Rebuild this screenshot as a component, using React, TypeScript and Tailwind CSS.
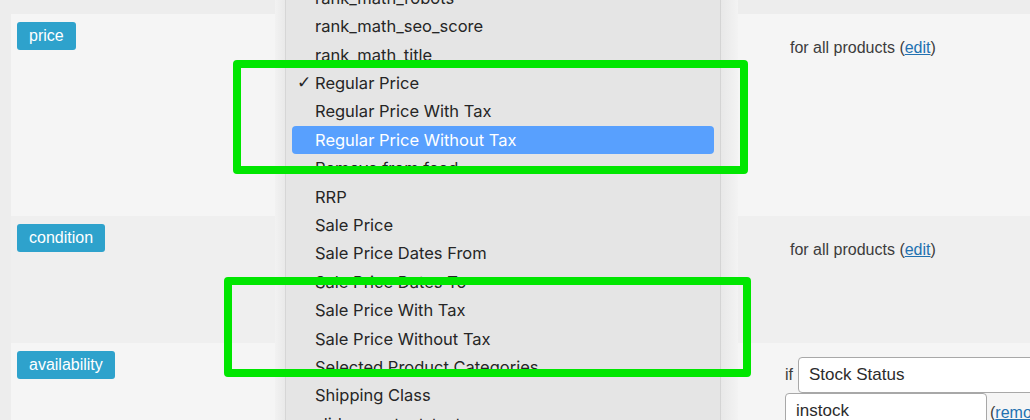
const menuItems = [
  'rank_math_robots',
  'rank_math_seo_score',
  'rank_math_title',
  'Regular Price',
  'Regular Price With Tax',
  'Regular Price Without Tax',
  'Remove from feed',
  'RRP',
  'Sale Price',
  'Sale Price Dates From',
  'Sale Price Dates To',
  'Sale Price With Tax',
  'Sale Price Without Tax',
  'Selected Product Categories',
  'Shipping Class',
  'slider_content_text',
];

function Badge({ label }: { label: string }) {
  return (
    <span className="inline-flex h-[28px] items-center rounded-[3px] bg-[#2ea2cc] px-[12px] text-[16px] text-white">
      {label}
    </span>
  );
}

function AllProducts() {
  return (
    <div className="pt-[14px] text-[16px] text-[#3c3c3c]">
      for all products (<a className="text-[#2271b1] underline">edit</a>)
    </div>
  );
}

export default function App() {
  return (
    <div className="relative h-[420px] w-[1030px] overflow-hidden bg-[#ededed] pt-[14px] pl-[11px] font-['Liberation_Sans',Arial,sans-serif]">
      {/* rows */}
      <div className="flex h-[202px] bg-[#f5f5f5] pt-2 pl-[6px]">
        <div className="w-[773px] shrink-0">
          <Badge label="price" />
        </div>
        <AllProducts />
      </div>
      <div className="flex h-[127px] bg-[#efefef] pt-2 pl-[6px]">
        <div className="w-[773px] shrink-0">
          <Badge label="condition" />
        </div>
        <AllProducts />
      </div>
      <div className="flex h-[100px] bg-[#f5f5f5] pt-2 pl-[6px]">
        <div className="w-[768px] shrink-0">
          <Badge label="availability" />
        </div>
        <div className="flex shrink-0 flex-col pt-[6px]">
          <div className="flex items-center">
            <span className="w-[13px] text-[16px] text-[#3c3c3c]">if</span>
            <div className="flex h-[36px] w-[260px] items-center rounded-[4px] border border-[#a8a8a8] bg-white pl-[10px] text-[17px] text-[#2c2c2c]">
              Stock Status
            </div>
          </div>
          <div className="flex items-start">
            <div className="flex h-[36px] w-[202px] items-center rounded-[4px] border border-[#a8a8a8] bg-white pl-[10px] text-[17px] text-[#2c2c2c]">
              instock
            </div>
            <span className="ml-[3px] pt-[8px] text-[16px] text-[#3c3c3c]">
              (<a className="text-[#2271b1] underline">remove</a>)
            </span>
          </div>
        </div>
      </div>

      {/* native select menu */}
      <div className="absolute top-0 left-[275px] flex h-[420px]">
        <div className="w-[11px] bg-gradient-to-r from-[#f2f2f2] to-[#e9e9e9] border-r border-[#d6d6d6]" />
        <div className="w-[434px] bg-[#e5e5e5] px-[6px] font-['Inter','Noto_Sans',sans-serif] text-[16.5px] text-[#262626]">
          <div className="-mt-[16px]">
            {menuItems.map((item) => {
              const active = item === 'Regular Price Without Tax';
              const checked = item === 'Regular Price';
              return (
                <div
                  key={item}
                  className={`flex h-[28.4px] items-center rounded-[4px] pl-[23px] ${
                    active ? 'bg-[#58a0fe] text-white' : ''
                  }`}
                >
                  <span className="relative">
                    {checked && (
                      <span className="absolute -left-[18px] -top-[1px] font-['DejaVu_Sans',sans-serif] text-[17px] font-bold">
                        ✓
                      </span>
                    )}
                    {item}
                  </span>
                </div>
              );
            })}
          </div>
        </div>
        <div className="w-[18px] border-l border-[#d4d4d4] bg-gradient-to-r from-[#e8e8e8] to-[#f3f3f3]" />
      </div>

      {/* highlight boxes */}
      <div className="absolute top-[60px] left-[233px] h-[114px] w-[515px] rounded-[4px] border-[8px] border-[#00e600]" />
      <div className="absolute top-[277px] left-[224px] h-[100px] w-[527px] rounded-[4px] border-[8px] border-[#00e600]" />
    </div>
  );
}
